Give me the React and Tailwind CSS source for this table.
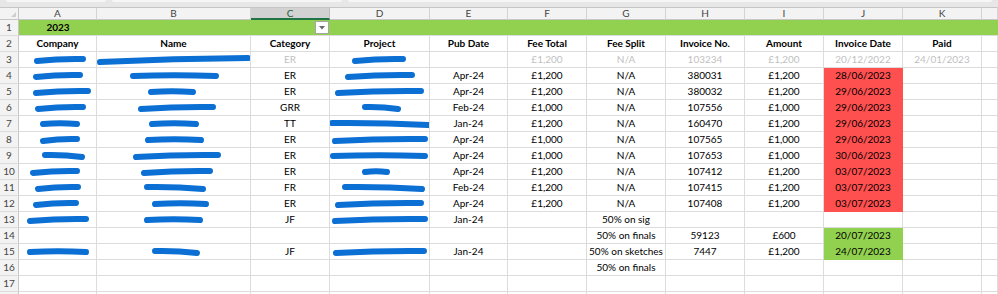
import React from "react";

const COLS = [
  { k: "A", w: 78 },
  { k: "B", w: 154 },
  { k: "C", w: 79 },
  { k: "D", w: 100 },
  { k: "E", w: 78 },
  { k: "F", w: 79 },
  { k: "G", w: 79 },
  { k: "H", w: 79 },
  { k: "I", w: 79 },
  { k: "J", w: 79 },
  { k: "K", w: 79 },
  { k: "L", w: 16 },
];

const R = "red";
const G = "green";

const ROWS = [
  { n: 3, gray: true, A: [18, 64, 1], B: [3, 151, 2], C: "ER", D: [25, 73, 1], F: "£1,200", G: "N/A", H: "103234", I: "£1,200", J: "20/12/2022", K: "24/01/2023" },
  { n: 4, A: [17, 61, 1], B: [36, 119, 0], C: "ER", D: [18, 82, 1], E: "Apr-24", F: "£1,200", G: "N/A", H: "380031", I: "£1,200", J: "28/06/2023", bg: R },
  { n: 5, A: [17, 69, 1], B: [54, 96, 0], C: "ER", D: [8, 91, 1], E: "Apr-24", F: "£1,200", G: "N/A", H: "380032", I: "£1,200", J: "29/06/2023", bg: R },
  { n: 6, A: [19, 64, 1], B: [44, 116, 1], C: "GRR", D: [35, 68, -1], E: "Feb-24", F: "£1,000", G: "N/A", H: "107556", I: "£1,000", J: "29/06/2023", bg: R },
  { n: 7, A: [24, 58, 0], B: [55, 99, 0], C: "TT", D: [2, 98, -1], E: "Jan-24", F: "£1,200", G: "N/A", H: "160470", I: "£1,200", J: "29/06/2023", bg: R },
  { n: 8, A: [24, 58, 1], B: [51, 104, 0], C: "ER", D: [5, 95, 1], E: "Apr-24", F: "£1,000", G: "N/A", H: "107565", I: "£1,000", J: "29/06/2023", bg: R },
  { n: 9, A: [26, 63, -1], B: [39, 121, 1], C: "ER", D: [3, 95, 0], E: "Apr-24", F: "£1,000", G: "N/A", H: "107653", I: "£1,000", J: "30/06/2023", bg: R },
  { n: 10, A: [14, 58, 1], B: [47, 113, 1], C: "ER", D: [35, 57, 0], E: "Apr-24", F: "£1,200", G: "N/A", H: "107412", I: "£1,200", J: "03/07/2023", bg: R },
  { n: 11, A: [19, 59, 1], B: [50, 106, -1], C: "FR", D: [15, 92, -1], E: "Feb-24", F: "£1,200", G: "N/A", H: "107415", I: "£1,200", J: "03/07/2023", bg: R },
  { n: 12, A: [17, 57, 1], B: [58, 109, 0], C: "ER", D: [8, 91, 1], E: "Apr-24", F: "£1,200", G: "N/A", H: "107408", I: "£1,200", J: "03/07/2023", bg: R },
  { n: 13, A: [11, 67, 1], B: [50, 103, 0], C: "JF", D: [5, 95, 1], E: "Jan-24", G: "50% on sig" },
  { n: 14, G: "50% on finals", H: "59123", I: "£600", J: "20/07/2023", bg: G },
  { n: 15, A: [11, 67, 0], B: [58, 100, -1], C: "JF", D: [6, 94, 1], E: "Jan-24", G: "50% on sketches", H: "7447", I: "£1,200", J: "24/07/2023", bg: G },
  { n: 16, G: "50% on finals" },
  { n: 17 },
  { n: "" },
];

function Scribble({ s }) {
  const [a, b, t] = s;
  const y = 8;
  const mid = (a + b) / 2;
  return (
    <svg className="block w-full h-full" aria-hidden="true">
      <path
        d={`M${a} ${y + t} Q${mid} ${y - 1.5} ${b} ${y - t}`}
        stroke="#0b6fd3"
        strokeWidth="6"
        strokeLinecap="round"
        fill="none"
      />
    </svg>
  );
}

function RowNum({ n }) {
  return (
    <div className="h-[16px] bg-[#f3f3f3] border-r border-b border-r-[#c6c6c6] border-b-[#dcdcdc] flex items-center justify-center text-[10px] text-[#444]">
      {n}
    </div>
  );
}

export default function App() {
  return (
    <div className="w-[998px] h-[294px] overflow-hidden bg-white font-['Lato',sans-serif] text-[10px] text-black">
      <div className="h-[7px] bg-[#e7e7e7] flex items-start gap-[6px] px-[6px]">
        <div className="w-[100px] h-[2px] bg-[#f6f6f6] rounded-b-sm" />
        <div className="w-[230px] h-[2px] bg-[#f6f6f6] rounded-b-sm" />
        <div className="flex-1 h-[2px] bg-[#f6f6f6] rounded-b-sm" />
      </div>

      <div className="grid grid-cols-[19px_78px_154px_79px_100px_78px_79px_79px_79px_79px_79px_79px_1fr]">
        <div className="h-[13px] bg-[#f3f3f3] border-r border-b border-t border-[#c6c6c6] flex items-end justify-end p-[2px]">
          <svg width="5" height="5" aria-hidden="true">
            <path d="M5 0 L5 5 L0 5 Z" fill="#cfcfcf" />
          </svg>
        </div>
        {COLS.map((c) =>
          c.k === "C" ? (
            <div
              key={c.k}
              className="h-[13px] bg-[#d2d2d2] border-r border-t border-r-[#bdbdbd] border-t-[#c6c6c6] border-b-2 border-b-[#217346] flex items-center justify-center text-[10px] text-[#1d5e3a]"
            >
              {c.k}
            </div>
          ) : (
            <div
              key={c.k}
              className="h-[13px] bg-[#f3f3f3] border-r border-b border-t border-r-[#d4d4d4] border-b-[#c6c6c6] border-t-[#c6c6c6] flex items-center justify-center text-[10px] text-[#444]"
            >
              {c.k === "L" ? "" : c.k}
            </div>
          )
        )}

        <RowNum n={1} />
        {COLS.map((c) => (
          <div
            key={c.k}
            className="h-[16px] bg-[#92d050] border-b border-b-[#dcdcdc] flex items-center justify-center font-bold"
          >
            {c.k === "A" ? "2023" : null}
            {c.k === "C" ? (
              <div className="w-full flex justify-end pr-[1px]">
                <div className="w-[14px] h-[13px] bg-white border border-[#a6a6a6] flex items-center justify-center">
                  <svg width="6" height="4" aria-hidden="true">
                    <path d="M0 0 L6 0 L3 3.5 Z" fill="#6a6a6a" />
                  </svg>
                </div>
              </div>
            ) : null}
          </div>
        ))}

        <RowNum n={2} />
        {["Company", "Name", "Category", "Project", "Pub Date", "Fee Total", "Fee Split", "Invoice No.", "Amount", "Invoice Date", "Paid", ""].map((h, i) => (
          <div
            key={i}
            className="h-[16px] border-r border-b border-[#dcdcdc] flex items-center justify-center font-bold whitespace-nowrap"
          >
            {h}
          </div>
        ))}

        {ROWS.map((r, ri) => (
          <React.Fragment key={ri}>
            <RowNum n={r.n} />
            {COLS.map((c) => {
              const v = r[c.k];
              const isJ = c.k === "J" && r.bg;
              const bgCls = isJ
                ? r.bg === R
                  ? "bg-[#ff5050] border-[#ff5050]"
                  : "bg-[#92d050] border-[#92d050]"
                : "border-[#dcdcdc]";
              return (
                <div
                  key={c.k}
                  className={`h-[16px] border-r border-b ${bgCls} flex items-center justify-center whitespace-nowrap ${r.gray ? "text-[#bfbfbf]" : "text-black"}`}
                >
                  {Array.isArray(v) ? <Scribble s={v} /> : v}
                </div>
              );
            })}
          </React.Fragment>
        ))}
      </div>
    </div>
  );
}
